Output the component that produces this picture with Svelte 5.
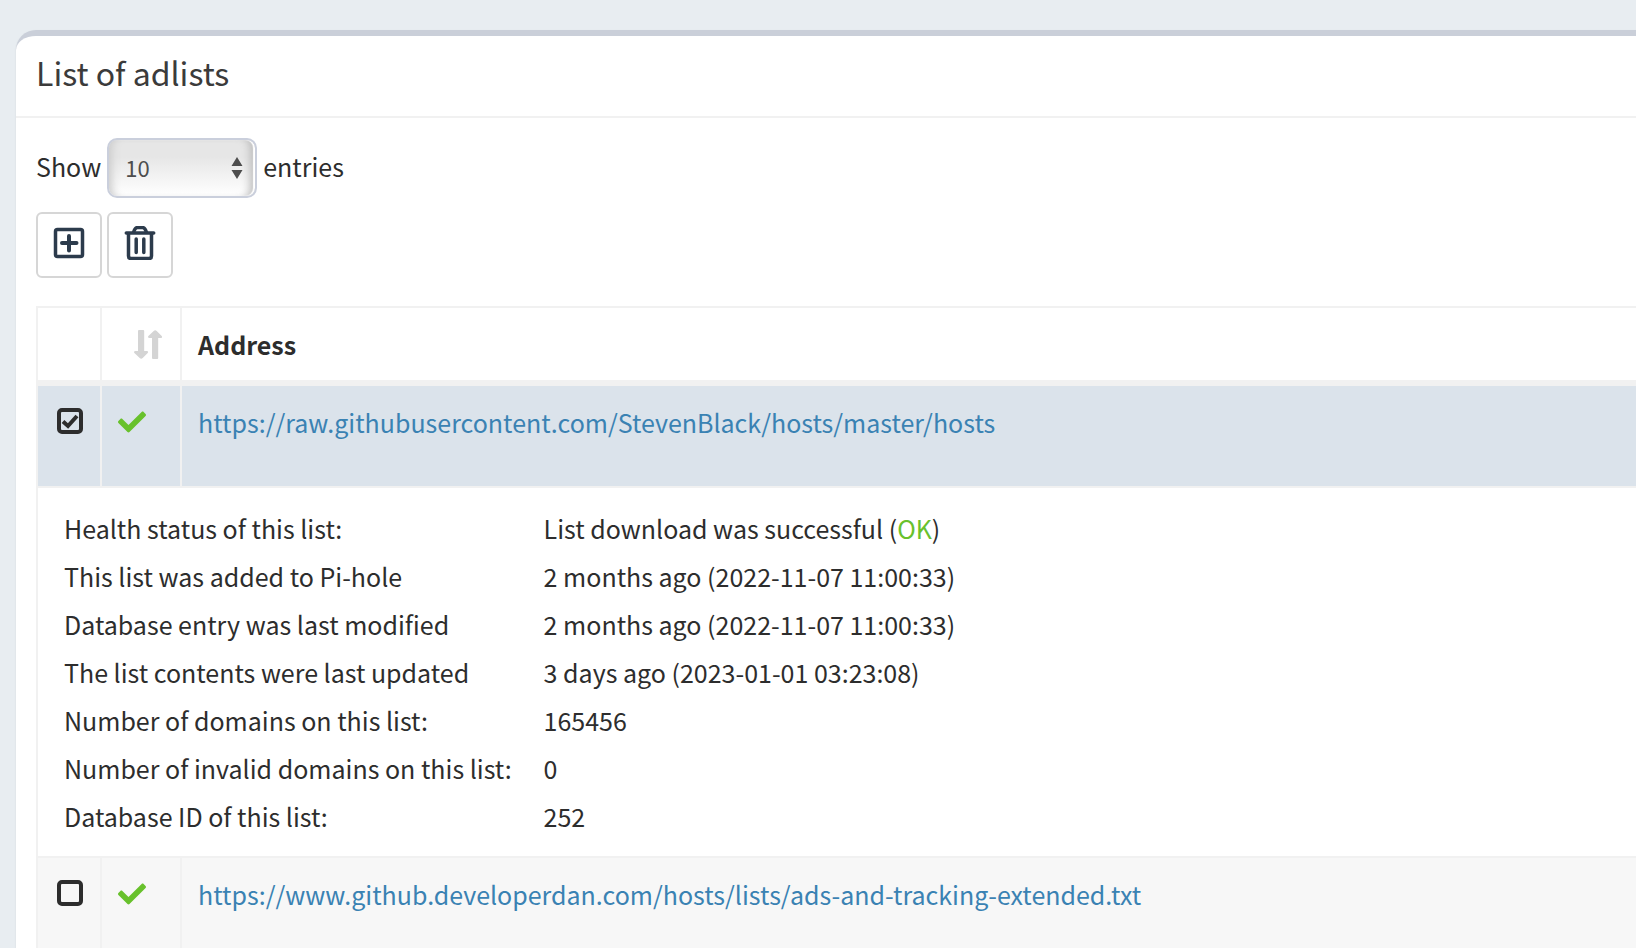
<script>
  let pageLength = $state("10");

  let lists = $state([
    {
      id: 252,
      address: "https://raw.githubusercontent.com/StevenBlack/hosts/master/hosts",
      selected: true,
      details: [
        { label: "Health status of this list:", value: "List download was successful", status: "OK" },
        { label: "This list was added to Pi-hole", value: "2 months ago (2022-11-07 11:00:33)" },
        { label: "Database entry was last modified", value: "2 months ago (2022-11-07 11:00:33)" },
        { label: "The list contents were last updated", value: "3 days ago (2023-01-01 03:23:08)" },
        { label: "Number of domains on this list:", value: "165456" },
        { label: "Number of invalid domains on this list:", value: "0" },
        { label: "Database ID of this list:", value: "252" }
      ]
    },
    {
      id: 253,
      address: "https://www.github.developerdan.com/hosts/lists/ads-and-tracking-extended.txt",
      selected: false,
      details: null
    }
  ]);

  const selectAll = () => lists.forEach(list => (list.selected = true));

  const removeSelected = () => {
    lists = lists.filter(list => !list.selected);
  };
</script>

<main class="content">
  <section class="box">
    <header class="box-header">
      <h3 class="box-title">List of adlists</h3>
    </header>

    <div class="box-body">
      <div class="length">
        <label for="page-length">Show</label>
        <span class="select">
          <select id="page-length" bind:value={pageLength}>
            <option value="10">10</option>
            <option value="25">25</option>
            <option value="50">50</option>
            <option value="100">100</option>
          </select>
          <svg class="select-arrows" viewBox="0 0 12 22" aria-hidden="true">
            <path d="M6 0l5.500 9h-11zM6 22l5.500-9h-11z" />
          </svg>
        </span>
        <label for="page-length">entries</label>
      </div>

      <div class="buttons">
        <button type="button" class="btn" aria-label="Select all" onclick={selectAll}>
          <svg viewBox="0 0 34 34" aria-hidden="true">
            <rect x="3.500" y="3.500" width="27" height="27" rx="2" />
            <path d="M17 10v14.500M10 17h14.500" stroke-width="4" stroke-linecap="round" />
          </svg>
        </button>
        <button type="button" class="btn" aria-label="Delete selected" onclick={removeSelected}>
          <svg viewBox="0 0 34 34" aria-hidden="true">
            <path d="M5.500 7v23q0 2.500 2.500 2.500h18q2.500 0 2.500-2.500V7" />
            <path d="M3.300 7h27.400" stroke-linecap="round" />
            <path d="M10.500 6.500q1.500-5 4-5h5q2.500 0 4 5" />
            <path d="M13.200 13v13.500M20.800 13v13.500" stroke-linecap="round" />
          </svg>
        </button>
      </div>

      <table class="adlists">
        <thead>
          <tr>
            <th class="col-select" aria-label="Selected"></th>
            <th class="col-status" aria-label="Status">
              <svg class="sort" viewBox="0 0 28 29" aria-hidden="true">
                <path d="M4 1q0-1 1-1h4.200q1 0 1 1v20h3q1.500 0.500 0.500 2l-5 5q-1.500 1.500-3 0l-5.300-5q-1-1.500 0.600-2h3z" />
                <path d="M18 28q0 1 1 1h4.200q1 0 1-1V8h3q1.500-.5.500-2l-5-5q-1.500-1.500-3 0l-5.300 5q-1 1.500.6 2H18z" />
              </svg>
            </th>
            <th>Address</th>
          </tr>
        </thead>
        <tbody>
          {#each lists as list (list.id)}
            <tr class="row" class:selected={list.selected}>
              <td class="col-select">
                <span class="check">
                  <input
                    type="checkbox"
                    aria-label="Select {list.address}"
                    bind:checked={list.selected} />
                  {#if list.selected}
                    <svg viewBox="0 0 18 16" aria-hidden="true">
                      <path d="M2 8.500l5 4.500L16 3" />
                    </svg>
                  {/if}
                </span>
              </td>
              <td class="col-status">
                <svg class="ok-icon" viewBox="0 0 512 512" aria-hidden="true">
                  <path
                    d="M173.898 439.404l-166.400-166.400c-9.997-9.997-9.997-26.206 0-36.204l36.203-36.204c9.997-9.998 26.207-9.998 36.204 0L192 312.690 432.095 72.596c9.997-9.997 26.207-9.997 36.204 0l36.203 36.204c9.997 9.997 9.997 26.206 0 36.204l-294.400 294.401c-9.998 9.997-26.207 9.997-36.204-.001z" />
                </svg>
              </td>
              <td><a href={list.address}>{list.address}</a></td>
            </tr>
            {#if list.details}
              <tr class="child">
                <td colspan="3">
                  <table class="details">
                    <tbody>
                      {#each list.details as item}
                        <tr>
                          <th scope="row">{item.label}</th>
                          <td>
                            {item.value}
                            {#if item.status}(<span class="ok">{item.status}</span>){/if}
                          </td>
                        </tr>
                      {/each}
                    </tbody>
                  </table>
                </td>
              </tr>
            {/if}
          {/each}
        </tbody>
      </table>
    </div>
  </section>
</main>

<style>
  :global(body) {
    background-color: #e8edf1;
  }

  .content {
    box-sizing: border-box;
    height: 100vh;
    padding: 30px 0 0 16px;
    overflow: hidden;
    color: #2d2d2d;
    font-family: "Noto Sans CJK SC", "Noto Sans", sans-serif;
    font-size: 25px;
    line-height: 40px;
  }

  .box {
    min-height: 100%;
    background-color: #fff;
    border-top: 6px solid #cacfd9;
    border-top-left-radius: 20px;
    box-shadow: 0 1px 2px rgba(0, 0, 0, 0.1);
  }

  .box-header {
    padding: 16px 20px 24px;
    border-bottom: 2px solid #f1f1f1;
  }

  .box-title {
    margin: 0;
    color: #3b3b3b;
    font-size: 32px;
    font-weight: 400;
    line-height: 40px;
  }

  .box-body {
    padding: 20px 0 0 20px;
  }

  .length {
    display: flex;
    align-items: center;
    gap: 6px;
  }

  .length label {
    padding-bottom: 4px;
  }

  .select {
    display: inline-grid;
    align-items: center;
  }

  .select > * {
    grid-area: 1 / 1;
  }

  .select select {
    width: 150px;
    height: 60px;
    padding: 0 16px 2px;
    appearance: none;
    color: #4d4d4d;
    font-family: inherit;
    font-size: 22px;
    background: linear-gradient(#e6e6e6 30%, #fff);
    border: 2px solid #cacfdc;
    border-radius: 10px;
    box-shadow: inset -2px 0 1px #fff, inset 9px 0 8px -6px #ccc, inset -11px 0 8px -6px #bbb;
  }

  .select-arrows {
    width: 12px;
    height: 22px;
    margin-right: 14px;
    justify-self: end;
    fill: #4d4d4d;
    pointer-events: none;
  }

  .buttons {
    display: flex;
    gap: 5px;
    margin-top: 14px;
  }

  .btn {
    display: flex;
    justify-content: center;
    width: 66px;
    height: 66px;
    padding: 12px 0;
    background-color: #fff;
    border: 2px solid #d6d6d6;
    border-radius: 6px;
    cursor: pointer;
  }

  .btn svg {
    width: 34px;
    height: 34px;
    fill: none;
    stroke: #2c3b4c;
    stroke-width: 3.5;
  }

  .adlists {
    width: 100%;
    margin-top: 28px;
    border-collapse: separate;
    border-spacing: 0;
    border-top: 2px solid #f1f1f1;
    border-left: 2px solid #f1f1f1;
  }

  .adlists > thead th {
    height: 40px;
    padding: 16px;
    text-align: left;
    border-bottom: 6px solid #f1f1f1;
  }

  .adlists .col-select {
    width: 60px;
    padding: 22px 0 16px 2px;
  }

  .adlists .col-status {
    width: 46px;
    padding-top: 22px;
  }

  .adlists > thead .col-select,
  .adlists > thead .col-status {
    padding-top: 16px;
    padding-bottom: 16px;
  }

  .adlists > thead .col-status {
    width: 44px;
    padding-right: 18px;
  }

  .col-select,
  .col-status {
    border-right: 2px solid #f1f1f1;
  }

  .sort {
    display: block;
    width: 28px;
    height: 29px;
    margin-left: auto;
    fill: #d4d4d4;
  }

  .row td {
    height: 68px;
    padding: 16px;
    vertical-align: top;
    background-color: #f7f7f7;
    border-bottom: 2px solid #f1f1f1;
  }

  .row .col-select,
  .row .col-status {
    height: 62px;
  }

  .row.selected td {
    background-color: #dbe3eb;
  }

  .check {
    display: grid;
    place-items: center;
  }

  .check > * {
    grid-area: 1 / 1;
  }

  .check input {
    width: 26px;
    height: 26px;
    margin: 0;
    appearance: none;
    border: 4px solid #2d2d2d;
    border-radius: 5px;
  }

  .check svg {
    width: 18px;
    height: 16px;
    fill: none;
    stroke: #2d2d2d;
    stroke-width: 4;
    pointer-events: none;
  }

  .ok-icon {
    display: block;
    width: 28px;
    height: 28px;
    fill: #68c12c;
  }

  a {
    color: #3a82b3;
    text-decoration: none;
  }

  .child > td {
    padding: 16px;
    border-bottom: 2px solid #f1f1f1;
  }

  .details {
    border-collapse: separate;
    border-spacing: 0;
  }

  .details th,
  .details td {
    padding: 4px 22px 4px 10px;
    font-weight: 400;
    text-align: left;
  }

  .ok {
    color: #68c12c;
  }
</style>
